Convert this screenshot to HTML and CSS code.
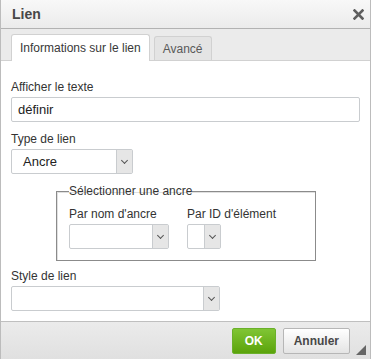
FILE: index.html
```html
<!DOCTYPE html>
<html lang="fr">

<head>
    <title>Lien</title>
    <link rel="stylesheet" href="styles.css">
</head>

<body>
    <div class="dialog">
        <div class="dialog-title">
            <span>Lien</span>
            <svg class="dialog-close" width="11" height="11" viewBox="0 0 11 11">
                <path d="M1.5 1.5 L9.5 9.5 M9.5 1.5 L1.5 9.5" stroke="#5e5e5e" stroke-width="2.6" stroke-linecap="square"/>
            </svg>
        </div>

        <div class="dialog-tabs">
            <div class="tab tab-active">Informations sur le lien</div>
            <div class="tab">Avancé</div>
        </div>

        <div class="dialog-body">
            <div class="field">
                <label>Afficher le texte</label>
                <div class="text-input">définir</div>
            </div>

            <div class="field">
                <label>Type de lien</label>
                <div class="select select-type">
                    <span class="select-value">Ancre</span>
                    <span class="select-arrow"></span>
                </div>
            </div>

            <fieldset class="anchor-box">
                <legend>Sélectionner une ancre</legend>
                <div class="anchor-row">
                    <div class="field">
                        <label>Par nom d'ancre</label>
                        <div class="select select-name">
                            <span class="select-value"></span>
                            <span class="select-arrow"></span>
                        </div>
                    </div>
                    <div class="field">
                        <label>Par ID d'élément</label>
                        <div class="select select-id">
                            <span class="select-value"></span>
                            <span class="select-arrow"></span>
                        </div>
                    </div>
                </div>
            </fieldset>

            <div class="field">
                <label>Style de lien</label>
                <div class="select select-style">
                    <span class="select-value"></span>
                    <span class="select-arrow"></span>
                </div>
            </div>
        </div>

        <div class="dialog-footer">
            <button class="btn btn-ok">OK</button>
            <button class="btn">Annuler</button>
            <span class="resizer"></span>
        </div>
    </div>
</body>

</html>
```

FILE: styles.css
```css
body {
    margin: 0;
    font-family: 'Liberation Sans', Arial, sans-serif;
    font-size: 12px;
    color: #333;
    background: #fff;
}

.dialog {
    width: 369px;
    height: 359px;
    border-left: 1px solid #bcbcbc;
    border-right: 1px solid #bcbcbc;
    display: flex;
    flex-direction: column;
    background: #fff;
}

.dialog-title {
    height: 28px;
    display: flex;
    align-items: center;
    justify-content: space-between;
    padding: 0 6px 0 11px;
    background: linear-gradient(#f8f8f8, #ebebeb);
    border-bottom: 1px solid #b2b2b2;
    font-weight: bold;
    font-size: 14px;
    color: #474747;
}

.dialog-tabs {
    height: 31px;
    display: flex;
    align-items: flex-end;
    gap: 4px;
    padding-left: 10px;
    background: #ebebeb;
    border-bottom: 1px solid #d1d1d1;
}

.tab {
    height: 23px;
    padding: 0 8px;
    display: flex;
    align-items: center;
    border: 1px solid #d1d1d1;
    border-bottom: none;
    border-radius: 3px 3px 0 0;
    background: #e4e4e4;
    color: #595959;
}

.tab-active {
    background: #fff;
    color: #383838;
    margin-bottom: -1px;
    height: 26px;
}

.dialog-body {
    flex: 1;
    padding: 19px 10px 0 10px;
}

.field {
    display: flex;
    flex-direction: column;
    margin-bottom: 10px;
}

.field label {
    margin-bottom: 3px;
}

.text-input {
    height: 23px;
    border: 1px solid #c9cccf;
    border-radius: 2px;
    padding: 0 6px;
    line-height: 23px;
    font-size: 13px;
    color: #222;
}

.select {
    height: 23px;
    display: flex;
    border: 1px solid #c9cccf;
    border-radius: 2px;
}

.select-value {
    flex: 1;
    line-height: 23px;
    padding-left: 11px;
    font-size: 13px;
    color: #222;
}

.select-arrow {
    width: 15px;
    background: #e6e6e6;
    border-left: 1px solid #c9cccf;
    position: relative;
}

.select-arrow::after {
    content: '';
    position: absolute;
    left: 5px;
    top: 8px;
    width: 4px;
    height: 4px;
    border-right: 1px solid #555;
    border-bottom: 1px solid #555;
    transform: rotate(45deg);
}

.select-type {
    width: 120px;
}

.select-name {
    width: 98px;
}

.select-id {
    width: 32px;
}

.select-style {
    width: 207px;
}

.anchor-box {
    width: 234px;
    margin: 0 0 8px 45px;
    padding: 9px 12px 11px 12px;
    border: 1px solid #8b8b8b;
    box-shadow: inset 1px 1px 0 #e0e0e0;
}

.anchor-box legend {
    padding: 0;
}

.anchor-row {
    display: flex;
    gap: 18px;
}

.anchor-row .field {
    margin-bottom: 0;
}

.dialog-footer {
    height: 37px;
    display: flex;
    align-items: center;
    justify-content: flex-end;
    gap: 7px;
    padding-right: 20px;
    background: linear-gradient(#ebebeb, #e0e0e0);
    border-top: 1px solid #bfbfbf;
    position: relative;
}

.btn {
    height: 26px;
    padding: 0 10px;
    border: 1px solid #b6b6b6;
    border-radius: 2px;
    background: linear-gradient(#fff, #e4e4e4);
    font-family: inherit;
    font-size: 12px;
    font-weight: bold;
    color: #474747;
}

.btn-ok {
    padding: 0 12px;
    border-color: #6ab02a;
    background: linear-gradient(#80c534, #5ba30b);
    color: #fff;
}

.resizer {
    position: absolute;
    right: 4px;
    bottom: 4px;
    width: 0;
    height: 0;
    border-left: 10px solid transparent;
    border-bottom: 10px solid #666;
}
```
